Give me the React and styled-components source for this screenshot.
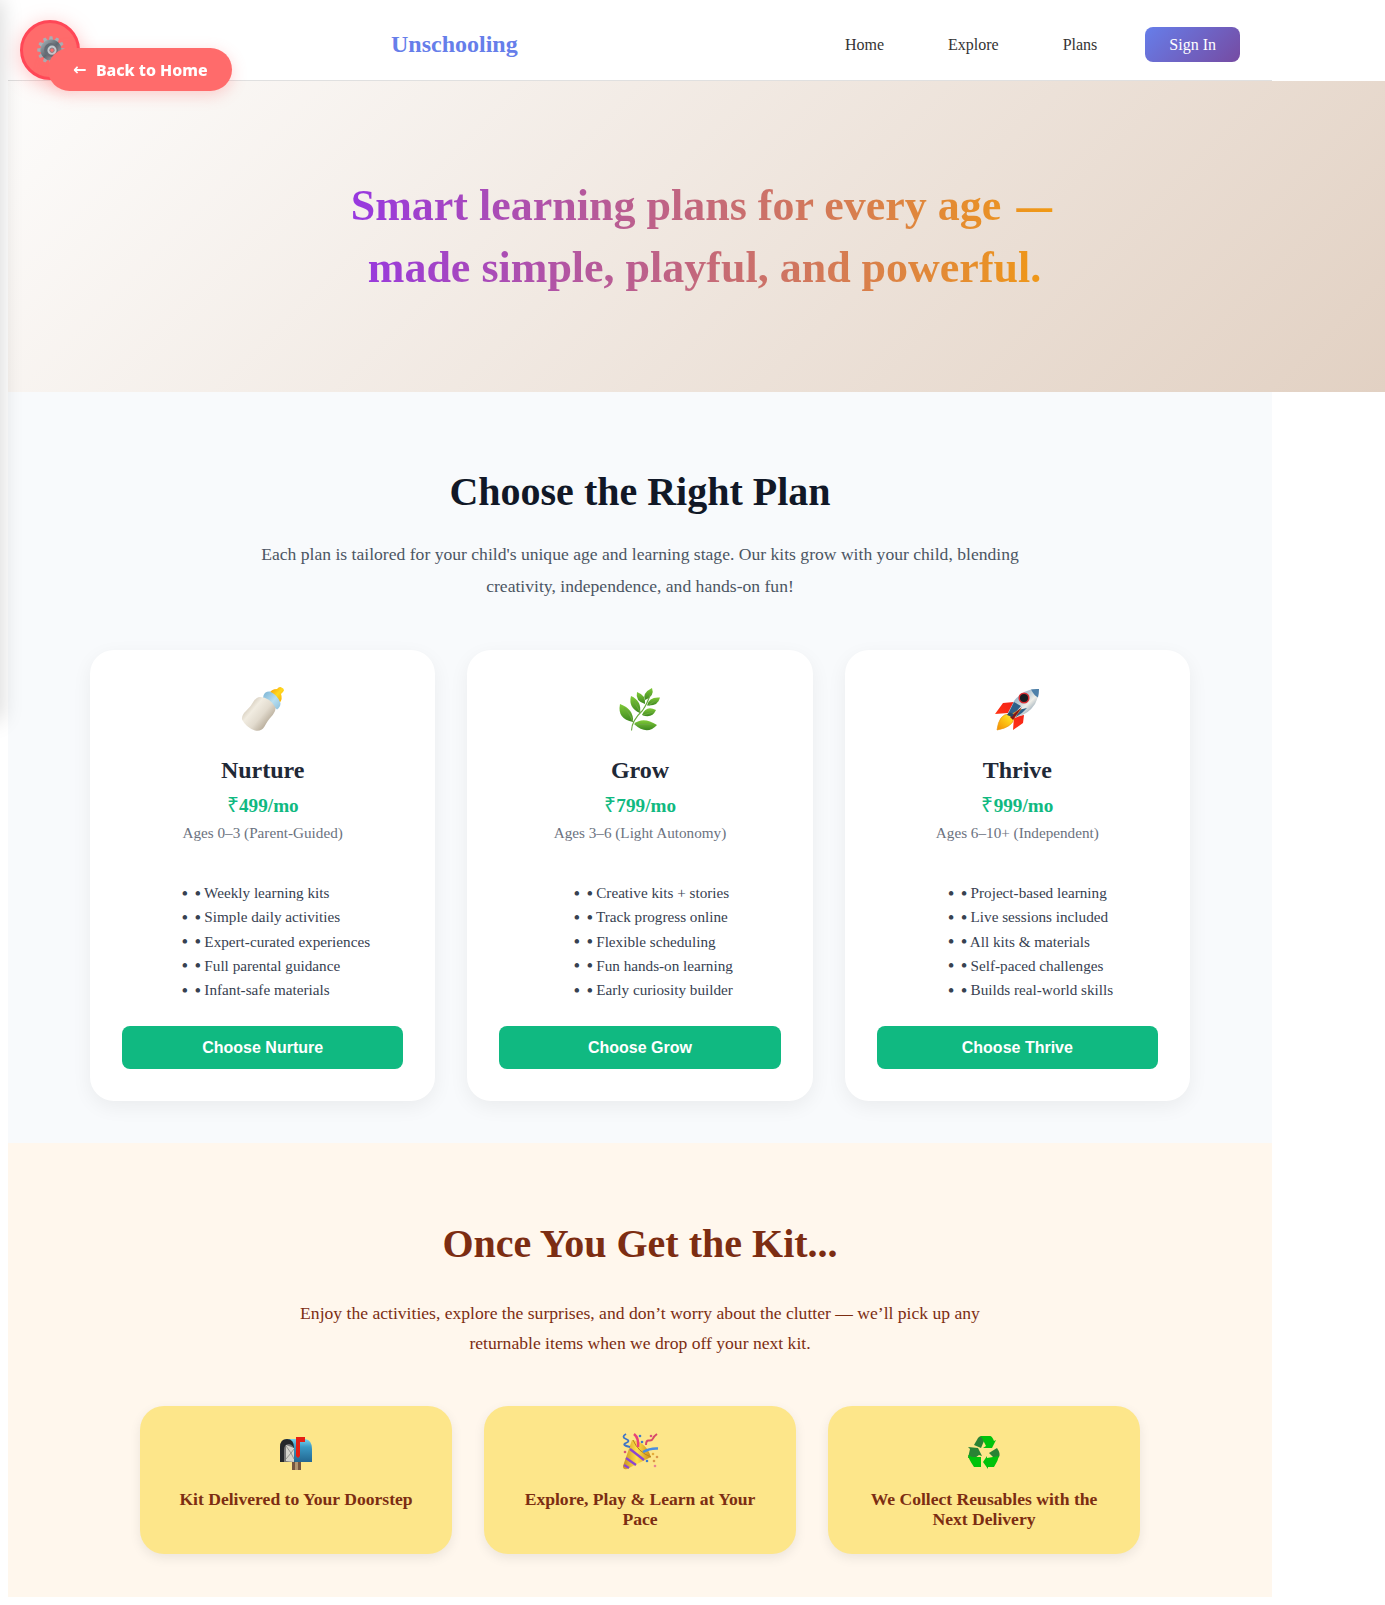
import React from "react";
import styled, { createGlobalStyle } from "styled-components";

const Global = createGlobalStyle`
  html { background: #fff; }
  body { margin: 0; font-family: "Liberation Serif", "Times New Roman", serif; color: #000; }
  h1, h2, h3, p { margin: 0; }
`;
const Page = styled.div`width: 1264px; padding: 8px;`;
const Header = styled.header`
  height: 72px; border-bottom: 1px solid #e0e0e0; background: #fff;
  display: flex; align-items: center; justify-content: space-between;
  padding: 0 32px 0 383px; box-sizing: content-box; width: 849px;
`;
const Brand = styled.div`font-size: 24px; font-weight: 700; color: #667eea;`;
const Nav = styled.nav`display: flex; align-items: center; font-size: 16px; color: #333;`;
const NavLink = styled.a`padding-top: 1px; margin-right: ${(p) => p.$gap}px;`;
const SignIn = styled.a`
  padding: 8px 24px; border-radius: 8px; color: #fff; line-height: 19px;
  background: linear-gradient(135deg, #667eea, #764ba2); font-weight: 500;
`;
const Hero = styled.section`
  width: 1377px; height: 311px; box-sizing: border-box; padding: 94px 0 0 10px;
  background: linear-gradient(135deg, #fdfcfb 0%, #e2d1c3 100%);
  display: flex; justify-content: center; align-items: flex-start;
`;
const HeroTitle = styled.h1`
  width: 768px; font-size: 44px; line-height: 62px; text-align: center; white-space: nowrap;
  background: linear-gradient(to right, #9333ea, #f59e0b);
  -webkit-background-clip: text; background-clip: text; color: transparent;
`;
const Dash = styled.span`font-family: "Liberation Sans", Arial, sans-serif; font-size: 36px; line-height: 1; margin-left: 4px;`;
const SecondLine = styled.span`padding-left: 6px;`;
const Section = styled.section`
  box-sizing: border-box; height: ${(p) => p.$h}px; padding-top: ${(p) => p.$top}px;
  background: ${(p) => p.$bg}; text-align: center;
`;
const Heading = styled.h2`font-size: 40px; line-height: 46px; color: ${(p) => p.$color};`;
const Lead = styled.p`
  width: ${(p) => p.$w}px; margin: ${(p) => p.$m}; font-size: 17.6px;
  line-height: ${(p) => p.$lh}px; color: ${(p) => p.$color};
`;
const Cards = styled.div`display: grid; grid-template-columns: repeat(3, ${(p) => p.$w}px); gap: 32px; justify-content: center;`;
const PlanCard = styled.article`
  height: 451px; box-sizing: border-box; padding: 32px; border-radius: 24px; background: #fff;
  box-shadow: 0 6px 20px rgba(0,0,0,.06); display: flex; flex-direction: column; align-items: center;
`;
const PlanIcon = styled.div`height: 50px; padding-top: 4px; svg { display: block; }`;
const PlanName = styled.h3`margin-top: 20px; font-size: 24px; line-height: 28px; color: #1f2937;`;
const Price = styled.p`margin-top: 11px; font-size: 19.2px; line-height: 22px; font-weight: 700; color: #10b981;`;
const Rupee = styled.span`font-size: 21px; line-height: 1; font-weight: 400; letter-spacing: .4px;`;
const Age = styled.p`margin-top: 7px; font-size: 15.2px; line-height: 17px; color: #6b7280;`;
const Features = styled.ul`
  margin: 40px 0 0; padding-left: 40px; text-align: left; color: #374151; list-style: none;
  font-size: 15.2px; line-height: 24.32px;
`;
const Feature = styled.li`
  height: 24.32px; white-space: nowrap;
  &::before {
    content: "•"; display: inline-block; width: 13px; margin-left: -13px;
    font-size: 19px; line-height: 0; vertical-align: -1.5px; text-indent: -0.7px;
  }
`;
const Dot = styled.span`
  display: inline-block; width: 5.3px; font-size: 19px; line-height: 0;
  vertical-align: -1.5px; text-indent: -0.7px;
`;
const Choose = styled.button`
  width: 100%; height: 43px; margin-top: auto; border: 0; border-radius: 8px;
  color: #fff; background: #10b981; font: 700 16px "Liberation Sans", Arial, sans-serif;
`;
const KitCard = styled.article`
  height: 148px; box-sizing: border-box; padding: 24px 32px; border-radius: 24px;
  background: #fde68a; box-shadow: 0 4px 12px rgba(0,0,0,.08);
  display: flex; flex-direction: column; align-items: center;
`;
const KitIcon = styled.div`height: 45px; svg { display: block; }`;
const KitTitle = styled.h3`margin-top: 14px; font-size: 17.6px; line-height: 20px; color: #7c2d12;`;
const Drawer = styled.aside`
  position: fixed; top: 0; left: -300px; width: 300px; height: 720px;
  background: #fff; box-shadow: 2px 0 20px rgba(0,0,0,.15);
`;
const Gear = styled.div`
  position: fixed; left: 20px; top: 20px; width: 60px; height: 60px; box-sizing: border-box;
  border: 3px solid #ff4757; border-radius: 50%; background: #ff6b6b; padding-left: 1px;
  box-shadow: 0 4px 20px rgba(255,107,107,.4); display: grid; place-items: center;
`;
const BackHome = styled.a`
  position: fixed; left: 48px; top: 48px; width: 184px; height: 43px; box-sizing: border-box;
  padding-left: 25px; border-radius: 25px; background: #ff6b6b; color: #fff;
  box-shadow: 0 4px 15px rgba(255,107,107,.3); display: flex; align-items: center; gap: 9.5px;
  font: 800 15.9px "Noto Sans", sans-serif; white-space: nowrap;
`;
const Arrow = styled.span`font-family: "DejaVu Sans", sans-serif; font-size: 16px;`;

const GearIcon = () => (
  <svg width="28" height="28" viewBox="0 0 28 28">
    <defs><linearGradient id="gear" x1="0" y1="0" x2="1" y2="1"><stop stopColor="#a3abb1" /><stop offset=".5" stopColor="#5c6971" /><stop offset="1" stopColor="#a2adb5" /></linearGradient></defs>
    {Array.from({ length: 12 }, (_, i) => (
      <path key={i} d="M11.800 5 12.600.3h2.800l.8 4.700z" fill="#a7afb5" transform={`rotate(${i * 30} 14 14)`} />
    ))}
    <circle cx="14" cy="14" r="8.600" fill="none" stroke="url(#gear)" strokeWidth="4" />
    <circle cx="14" cy="14" r="7" fill="#626e77" />
    <circle cx="15" cy="14.200" r="3.400" fill="#ff6b6b" stroke="#c5ccd1" strokeWidth="2.400" />
    <circle cx="15" cy="14.200" r="2.200" fill="#ff6b6b" stroke="#7c868c" />
  </svg>
);
const Bottle = () => (
  <svg width="48" height="50" viewBox="0 0 48 50">
    <defs>
      <linearGradient id="milk" x1=".15" y1=".2" x2=".8" y2=".75"><stop stopColor="#cfc5b4" /><stop offset=".3" stopColor="#f1ece1" /><stop offset=".65" stopColor="#e2dbce" /><stop offset="1" stopColor="#b9ae9c" /></linearGradient>
      <linearGradient id="teat" x1="0" y1="0" x2="1" y2="1"><stop stopColor="#f58f00" /><stop offset=".5" stopColor="#ffd91f" /><stop offset="1" stopColor="#f6a400" /></linearGradient>
      <linearGradient id="collar" x1="0" y1="0" x2="1" y2="1"><stop stopColor="#78b2d4" /><stop offset=".55" stopColor="#b9dff0" /><stop offset="1" stopColor="#8bbfdb" /></linearGradient>
    </defs>
    <path d="M30 8q2-5 8-5 2-2.500 4-1.800 3 .8 3 3Q44.500 6 42 8q2 5-1.500 9z" fill="url(#teat)" />
    <path d="M24.500 9.500Q26 5 31 5.500q8 4 10.500 11.500Q41.500 21 38 23.500L24 12.500z" fill="url(#collar)" />
    <path d="M21 11q10 .5 15.500 10.500.5 4-4.500 9.500-3 3-6.500 9.500Q22 46 16 44.500 7 41.500 3 33.500 2.500 29 7 25q5-4.500 7.500-9.500Q17.500 11 21 11z" fill="url(#milk)" />
  </svg>
);
const Herb = () => (
  <svg width="48" height="50" viewBox="0 0 48 50">
    <defs><linearGradient id="leaf" x2="0" y2="1"><stop stopColor="#80cb38" /><stop offset="1" stopColor="#3c861f" /></linearGradient></defs>
    <g fill="url(#leaf)">
      <path d="M29 14q-3-7 7-12 3 8-7 12z" /><path d="M29 18q-10-3-8-12 9 3 8 12z" />
      <path d="M31 19.500q2-9 13-8-2 9-13 8z" /><path d="M24 27q-12-5-9-17 11 5 9 17z" />
      <path d="M26 29q4-10 14-5-4 9-14 5z" /><path d="M17 36Q1 33 4 18q14 5 13 18z" />
      <path d="M18 38q9-8 23 1-10 11-23-1z" />
    </g>
    <path d="M15.500 44.500q0-9.500 11-20 5-7 8-17M17 36q-3-9-9-14M19 38.500h16M24 26l-6-11M27 29l10-3M33 19l7-5" fill="none" stroke="#6aa83f" strokeWidth="1.100" />
  </svg>
);
const Rocket = () => (
  <svg width="48" height="50" viewBox="0 0 48 50">
    <defs>
      <linearGradient id="hull" x1="0" y1="0" x2="1" y2="1"><stop stopColor="#4b91c5" /><stop offset=".4" stopColor="#b9c9d2" /><stop offset=".58" stopColor="#eeede7" /><stop offset="1" stopColor="#315c82" /></linearGradient>
      <linearGradient id="fin" x1="1" y1="0" x2="0" y2="1"><stop stopColor="#ee1c18" /><stop offset=".65" stopColor="#ff3115" /><stop offset="1" stopColor="#ffa12a" /></linearGradient>
      <linearGradient id="flame" x1="1" y1="0" x2="0" y2="1"><stop stopColor="#fffab0" /><stop offset=".5" stopColor="#ffd51c" /><stop offset="1" stopColor="#f38b00" /></linearGradient>
    </defs>
    <path d="m21 16-11 1-8 11 13-1zM31 29l-1 8-10 7 1-13z" fill="url(#fin)" />
    <path d="M46 3Q31 2 21 15l-6 12 6 5q14-3 21-14 4-8 4-15z" fill="url(#hull)" />
    <path d="M46 3q-4-.4-8 .5 3 6 7 8 1-4 1-8.500z" fill="#4e80a9" />
    <path d="m21 16-5 10 4 3 8-9zM23 31l2-7 9-2q-5 6-11 9z" fill="#2e6089" />
    <circle cx="31" cy="12" r="4.800" fill="#171d22" stroke="#d72d32" strokeWidth="1.500" />
    <path d="M16 28q-10 0-12 16 16-3 17-12l7-9-9 5z" fill="url(#flame)" stroke="#e99817" strokeWidth=".7" />
    <path d="m29 21-9 13-3-3z" fill="#851616" /><path d="m16 26 5 2-2 3-5-2z" fill="#244967" />
  </svg>
);
const Mailbox = () => (
  <svg width="40" height="45" viewBox="0 0 40 45">
    <defs><linearGradient id="box" x2="0" y2="1"><stop stopColor="#76d2f0" /><stop offset=".35" stopColor="#3998c4" /><stop offset="1" stopColor="#236791" /></linearGradient></defs>
    <path d="M16 29h9v11h-9z" fill="#755641" /><path d="M19 29h3v11h-3z" fill="#b29571" />
    <path d="M9 9h20q7 1 7 10v13H18z" fill="url(#box)" /><path d="M4 32V17Q4 9 11 9t7 9v14z" fill="#25282b" />
    <path d="M8 32V20q0-6 5-6 5 1 5 7v11z" fill="#777" /><path d="m10 15 8 3v14l-8-1z" fill="#d4d4cc" />
    <path d="m10 16 5 7-5 6m5-6 3-4m-3 4 3 6" stroke="#858580" fill="none" strokeWidth=".8" />
    <path d="M20 7h9v5h-5v14l-2 2-2-2z" fill="#e41e13" />
  </svg>
);
const Party = () => (
  <svg width="40" height="45" viewBox="0 0 40 45">
    <defs><linearGradient id="cone"><stop stopColor="#c98f1e" /><stop offset=".5" stopColor="#ffe14a" /><stop offset="1" stopColor="#cc8c16" /></linearGradient></defs>
    <path d="M12 10q14 2 19 17L7 39q-4 1-4-3z" fill="url(#cone)" />
    <path d="m10 19 14 11M6 28l10 7M4 35l5 3" stroke="#8b45d1" strokeWidth="2.300" />
    <path d="M13 10q5 12 18 17" fill="none" stroke="#b78020" strokeWidth="1" />
    <path d="M6 4q-5 3 0 5t0 4 4 4" fill="none" stroke="#3e74c7" strokeWidth="1.800" />
    <path d="M14 4q5 4 4 13" fill="none" stroke="#e94378" strokeWidth="2.500" />
    <path d="M26 15q0-5 3-4.500t4-2 4-4.500" fill="none" stroke="#d74b68" strokeWidth="2" />
    <path d="M23 22q7-4 15-3.500" fill="none" stroke="#4a8dde" strokeWidth="2.500" />
    {[[20,6,"#427bc8"],[22,12,"#427bc8"],[31,6,"#da517d"],[5,22,"#d8537b"],[27,31,"#397dd0"],[33,24,"#e4ad3c"],[37,27,"#dc984a"],[34,31,"#dc984a"],[35,36,"#e88293"]].map(([x,y,c]) => <circle key={`${x}-${y}`} cx={x} cy={y} r="1.300" fill={c} />)}
  </svg>
);
const Recycle = () => (
  <svg width="40" height="45" viewBox="0 0 40 45">
    <path d="m10 15 4-7q2-3 5-1l1 4-3 7z" fill="#298334" /><path d="M16 6h10q2 0 4 5l2-1-4 8h-9l3-2-4-8z" fill="#00c30b" />
    <path d="m4 17 10 1 4 8-3-1-4 3H4l2-9z" fill="#298334" /><path d="M4 25q0 3 6 12h7V27H8z" fill="#00c30b" />
    <path d="m25 23 8-5q4 6 2 9l-4 2z" fill="#298334" /><path d="m19 32 4-6v2l12-2q-1 5-5 11h-6v2z" fill="#00c30b" />
  </svg>
);

const plans = [
  { name: "Nurture", price: "499/mo", age: "Ages 0–3 (Parent-Guided)", Icon: Bottle, items: ["Weekly learning kits", "Simple daily activities", "Expert-curated experiences", "Full parental guidance", "Infant-safe materials"] },
  { name: "Grow", price: "799/mo", age: "Ages 3–6 (Light Autonomy)", Icon: Herb, items: ["Creative kits + stories", "Track progress online", "Flexible scheduling", "Fun hands-on learning", "Early curiosity builder"] },
  { name: "Thrive", price: "999/mo", age: "Ages 6–10+ (Independent)", Icon: Rocket, items: ["Project-based learning", "Live sessions included", "All kits & materials", "Self-paced challenges", "Builds real-world skills"] },
];
const steps = [
  { title: "Kit Delivered to Your Doorstep", Icon: Mailbox },
  { title: "Explore, Play & Learn at Your Pace", Icon: Party },
  { title: "We Collect Reusables with the Next Delivery", Icon: Recycle },
];

export default function App() {
  return (
    <>
      <Global />
      <Page>
        <Header>
          <Brand>Unschooling</Brand>
          <Nav>
            <NavLink $gap={64}>Home</NavLink><NavLink $gap={64}>Explore</NavLink><NavLink $gap={48}>Plans</NavLink>
            <SignIn>Sign In</SignIn>
          </Nav>
        </Header>
        <Hero>
          <HeroTitle>
            Smart learning plans for every age <Dash>—</Dash><br />
            <SecondLine>made simple, playful, and powerful.</SecondLine>
          </HeroTitle>
        </Hero>
        <Section $h={751} $top={77} $bg="#f8fafc">
          <Heading $color="#111827">Choose the Right Plan</Heading>
          <Lead $w={800} $m="23px auto 48px" $lh={32} $color="#4b5563">Each plan is tailored for your child's unique age and learning stage. Our kits grow with your child, blending creativity, independence, and hands-on fun!</Lead>
          <Cards $w={345.33}>
            {plans.map(({ name, price, age, Icon, items }) => (
              <PlanCard key={name}>
                <PlanIcon><Icon /></PlanIcon>
                <PlanName>{name}</PlanName><Price><Rupee>₹</Rupee>{price}</Price><Age>{age}</Age>
                <Features>{items.map((t) => <Feature key={t}><Dot>•</Dot> {t}</Feature>)}</Features>
                <Choose>Choose {name}</Choose>
              </PlanCard>
            ))}
          </Cards>
        </Section>
        <Section $h={454} $top={78} $bg="#fff7ed">
          <Heading $color="#7c2d12">Once You Get the Kit...</Heading>
          <Lead $w={700} $m="31px auto 48px" $lh={30} $color="#7c2d12">Enjoy the activities, explore the surprises, and don’t worry about the clutter — we’ll pick up any returnable items when we drop off your next kit.</Lead>
          <Cards $w={312}>
            {steps.map(({ title, Icon }) => <KitCard key={title}><KitIcon><Icon /></KitIcon><KitTitle>{title}</KitTitle></KitCard>)}
          </Cards>
        </Section>
      </Page>
      <Drawer />
      <Gear><GearIcon /></Gear>
      <BackHome><Arrow>←</Arrow>Back to Home</BackHome>
    </>
  );
}
